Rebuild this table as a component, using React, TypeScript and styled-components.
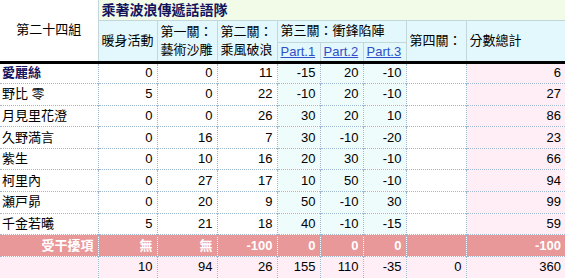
import styled, { createGlobalStyle } from 'styled-components';

const GlobalStyle = createGlobalStyle`
  html, body { margin: 0; padding: 0; background: #fff; }
  body {
    font-family: "Liberation Sans", "Noto Sans CJK TC", sans-serif;
    font-size: 13px;
    color: #000;
  }
`;

const Sheet = styled.table`
  width: 565px;
  table-layout: fixed;
  border-collapse: collapse;
`;

const HeadCell = styled.th<{ $bg?: string; $center?: boolean; $bold?: boolean }>`
  background: ${(p) => p.$bg || '#e3f8fc'};
  border: 1px solid #c3d6d9;
  padding: 0 3px;
  font-weight: ${(p) => (p.$bold ? 700 : 400)};
  text-align: ${(p) => (p.$center ? 'center' : 'left')};
  vertical-align: middle;
  line-height: 18px;
  white-space: nowrap;
  overflow: hidden;
`;

const Title = styled(HeadCell)`
  font-size: 14px;
  color: #14145e;
  background: #f2fbe8;
  border-top: none;
  border-right: none;
`;

const Corner = styled(HeadCell)`
  background: #fff;
  border-left: none;
  border-top: none;
`;

const PartLink = styled.a`
  color: #2f4fc8;
  text-decoration: underline;
`;

const HeadRow = styled.tr<{ $h: number }>`
  height: ${(p) => p.$h}px;
`;

const BodyRow = styled.tr<{ $first?: boolean }>`
  height: 21.6px;
  td {
    border-top: ${(p) => (p.$first ? '3px solid #000' : '1px dotted #9fb8d2')};
  }
`;

type Tone = 'plain' | 'part' | 'total' | 'penalty';

const tones: Record<Tone, string> = {
  plain: '#ffffff',
  part: '#effcfc',
  total: '#ffeef5',
  penalty: '#e99899',
};

const Cell = styled.td<{ $tone?: Tone; $left?: boolean; $bold?: boolean; $ink?: string }>`
  background: ${(p) => tones[p.$tone || 'plain']};
  border-right: 1px dotted #9fb8d2;
  padding: 0 4px 0 2px;
  text-align: ${(p) => (p.$left ? 'left' : 'right')};
  font-weight: ${(p) => (p.$bold ? 700 : 400)};
  color: ${(p) => p.$ink || (p.$tone === 'penalty' ? '#fff' : '#000')};
  white-space: nowrap;
  overflow: hidden;
  line-height: 16px;
  &:last-child { border-right: none; }
`;

const rows: [string, ...(number | '')[]][] = [
  ['愛麗絲', 0, 0, 11, -15, 20, -10, '', 6],
  ['野比 零', 5, 0, 22, -10, 20, -10, '', 27],
  ['月見里花澄', 0, 0, 26, 30, 20, 10, '', 86],
  ['久野満言', 0, 16, 7, 30, -10, -20, '', 23],
  ['紫生', 0, 10, 16, 20, 30, -10, '', 66],
  ['柯里內', 0, 27, 17, 10, 50, -10, '', 94],
  ['瀬戸昴', 0, 20, 9, 50, -10, 30, '', 99],
  ['千金若曦', 5, 21, 18, 40, -10, -15, '', 59],
];

const penalty = ['無', '無', -100, 0, 0, 0, '', -100];
const totals = [10, 94, 26, 155, 110, -35, 0, 360];

const toneFor = (i: number): Tone => (i >= 3 && i <= 5 ? 'part' : i === 7 ? 'total' : 'plain');

export default function App() {
  return (
    <>
      <GlobalStyle />
      <Sheet>
        <colgroup>
          <col style={{ width: 98 }} />
          <col style={{ width: 59 }} />
          <col style={{ width: 60 }} />
          <col style={{ width: 60 }} />
          <col style={{ width: 43 }} />
          <col style={{ width: 43 }} />
          <col style={{ width: 43 }} />
          <col style={{ width: 60 }} />
          <col style={{ width: 99 }} />
        </colgroup>
        <thead>
          <HeadRow $h={20}>
            <Corner rowSpan={3} $center>第二十四組</Corner>
            <Title colSpan={8} $bold>乘著波浪傳遞話語隊</Title>
          </HeadRow>
          <HeadRow $h={22}>
            <HeadCell rowSpan={2}>暖身活動</HeadCell>
            <HeadCell rowSpan={2}>第一關：<br />藝術沙雕</HeadCell>
            <HeadCell rowSpan={2}>第二關：<br />乘風破浪</HeadCell>
            <HeadCell colSpan={3}>第三關：衝鋒陷陣</HeadCell>
            <HeadCell rowSpan={2}>第四關：</HeadCell>
            <HeadCell rowSpan={2}>分數總計</HeadCell>
          </HeadRow>
          <HeadRow $h={19}>
            <HeadCell><PartLink href="#">Part.1</PartLink></HeadCell>
            <HeadCell><PartLink href="#">Part.2</PartLink></HeadCell>
            <HeadCell><PartLink href="#">Part.3</PartLink></HeadCell>
          </HeadRow>
        </thead>
        <tbody>
          {rows.map(([name, ...vals], r) => (
            <BodyRow key={name} $first={r === 0}>
              <Cell $left $bold={r === 0} $ink={r === 0 ? '#14145e' : undefined}>{name}</Cell>
              {vals.map((v, i) => (
                <Cell key={i} $tone={toneFor(i)}>{v}</Cell>
              ))}
            </BodyRow>
          ))}
          <BodyRow>
            <Cell $tone="penalty" $bold>受干擾項</Cell>
            {penalty.map((v, i) => (
              <Cell key={i} $tone="penalty" $bold>{v}</Cell>
            ))}
          </BodyRow>
          <BodyRow>
            <Cell $tone="total" />
            {totals.map((v, i) => (
              <Cell key={i} $tone="total">{v}</Cell>
            ))}
          </BodyRow>
        </tbody>
      </Sheet>
    </>
  );
}
